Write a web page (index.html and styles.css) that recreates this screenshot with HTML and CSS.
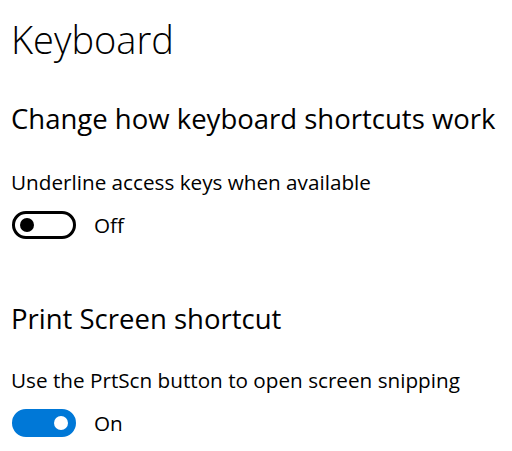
FILE: index.html
```html
<!DOCTYPE html>
<html lang="en">
<head>
<meta charset="utf-8">
<title>Keyboard</title>
<link rel="stylesheet" href="styles.css">
</head>
<body>
<main class="page">
  <h1 class="title">Keyboard</h1>
  <section class="group">
    <h2 class="group-title">Change how keyboard shortcuts work</h2>
    <p class="label">Underline access keys when available</p>
    <div class="toggle-row">
      <span class="toggle"></span>
      <span class="state">Off</span>
    </div>
  </section>
  <section class="group group-second">
    <h2 class="group-title">Print Screen shortcut</h2>
    <p class="label">Use the PrtScn button to open screen snipping</p>
    <div class="toggle-row">
      <span class="toggle toggle-on"></span>
      <span class="state">On</span>
    </div>
  </section>
</main>
</body>
</html>
```
FILE: styles.css
```css
html, body {
  margin: 0;
  padding: 0;
  background: #ffffff;
}

.page {
  padding: 15px 0 0 11px;
  font-family: "Open Sans", "Noto Sans", sans-serif;
  color: #000000;
}

.title {
  margin: 0;
  font-size: 38px;
  font-weight: 300;
  line-height: 48px;
}

.group {
  margin-top: 39px;
}

.group-second {
  margin-top: 63px;
}

.group-title {
  margin: 0;
  font-size: 27.5px;
  font-weight: 400;
  line-height: 34px;
}

.label {
  margin: 32px 0 0;
  font-size: 20.7px;
  line-height: 28px;
}

.group-second .label {
  margin-top: 30px;
}

.toggle-row {
  display: flex;
  align-items: center;
  gap: 18px;
  margin-top: 15px;
  padding-left: 1px;
}

.toggle {
  position: relative;
  box-sizing: border-box;
  width: 64px;
  height: 28px;
  border: 3px solid #000000;
  border-radius: 14px;
}

.toggle::after {
  content: "";
  position: absolute;
  left: 5px;
  top: 4px;
  width: 14px;
  height: 14px;
  border-radius: 50%;
  background: #000000;
}

.toggle-on {
  background: #0078d7;
  border-color: #0078d7;
}

.toggle-on::after {
  left: auto;
  right: 5px;
  background: #ffffff;
}

.state {
  font-size: 20.7px;
  line-height: 28px;
}
```
